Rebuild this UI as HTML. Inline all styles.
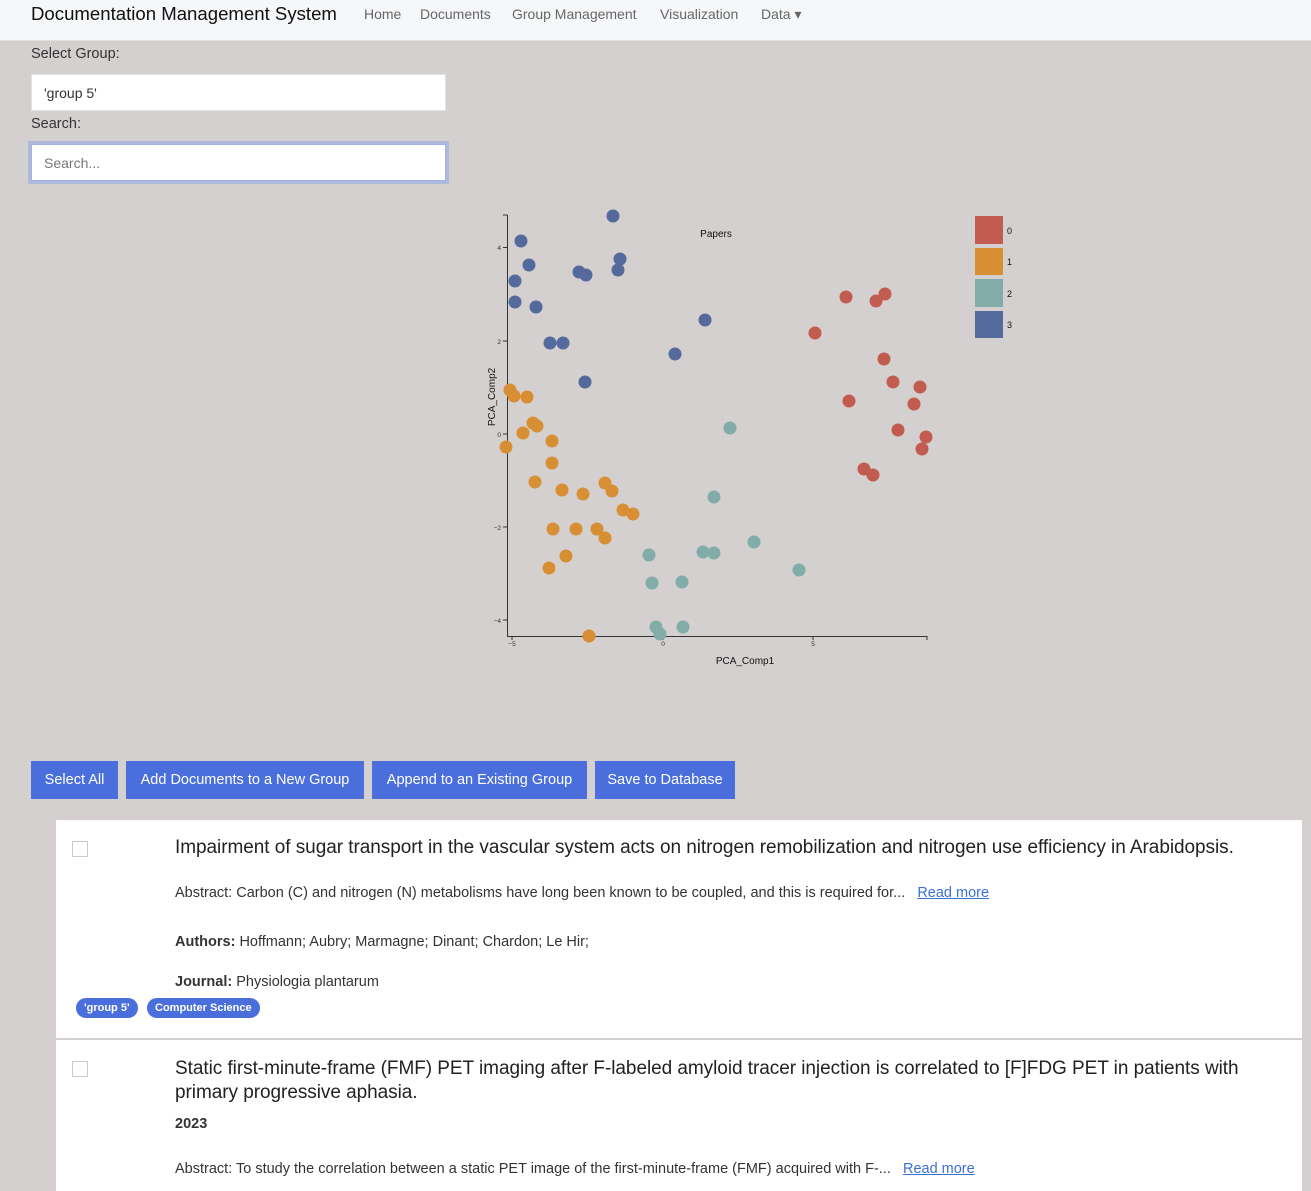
<!DOCTYPE html>
<html><head><meta charset="utf-8"><style>
*{box-sizing:border-box;margin:0;padding:0}
body{width:1311px;height:1191px;overflow:hidden;background:#d4d0cf;font-family:"Liberation Sans",sans-serif;color:#212529;position:relative}
.nav{position:absolute;left:0;top:0;width:1311px;height:41px;background:#f6f7f9;border-bottom:1px solid #e0e0e0}
.brand{position:absolute;left:31px;top:3px;font-size:18.6px;color:#111}
.nl{position:absolute;top:6px;font-size:14px;color:#666}
.lbl{position:absolute;left:31px;font-size:14.5px;color:#333}
.inp{position:absolute;left:31px;width:415px;height:37px;background:#fff;border:1px solid #e3e3e3;font-size:14px;padding:10px 12px}
.btn{position:absolute;top:761px;height:38px;background:#4a6fdc;color:#fff;font-size:14.5px;line-height:38px;text-align:center}
.card{position:absolute;left:56px;width:1246px;background:#fff}
.cb{position:absolute;left:16px;width:16px;height:16px;border:1px solid #ccc;background:#fff}
.t{position:absolute;left:119px;font-size:19px;color:#222;letter-spacing:-0.05px}
.s{position:absolute;left:119px;font-size:14.5px;color:#333}
.rm{color:#3a6fd8;text-decoration:underline;font-size:14.5px}
.badge{position:absolute;top:178px;height:20px;background:#4a6fdc;color:#fff;font-size:11px;font-weight:bold;border-radius:10px;line-height:20px;padding:0 8px}
</style></head><body>
<div class="nav">
<div class="brand">Documentation Management System</div>
<div class="nl" style="left:364px">Home</div>
<div class="nl" style="left:420px">Documents</div>
<div class="nl" style="left:512px">Group Management</div>
<div class="nl" style="left:660px">Visualization</div>
<div class="nl" style="left:761px">Data ▾</div>
</div>
<div class="lbl" style="top:46px">Select Group:</div>
<div class="inp" style="top:74px;color:#333">'group 5'</div>
<div class="lbl" style="top:116px">Search:</div>
<div class="inp" style="top:144px;color:#777;outline:3px solid #aeb9dc;border-color:#9db2e8">Search...</div>

<svg style="position:absolute;left:0;top:0" width="1311" height="700" font-family="Liberation Sans,sans-serif">
<g stroke="#333" stroke-width="1" fill="none">
<path d="M507.5 215V636.5H927M503 215h4.5M927 636v4M503 247.5h4M503 341h4M503 434h4M503 527h4M503 620h4M512 636v4M663 636v4M813 636v4"/>
</g>
<g font-size="6.5" fill="#333" text-anchor="end">
<text x="501" y="250">4</text><text x="501" y="344">2</text><text x="501" y="437">0</text><text x="501" y="530">−2</text><text x="501" y="623">−4</text>
</g>
<g font-size="6.5" fill="#333" text-anchor="middle">
<text x="512" y="646">−5</text><text x="663" y="646">0</text><text x="813" y="646">5</text>
</g>
<text x="716" y="237" font-size="10" text-anchor="middle" fill="#111">Papers</text>
<text x="745" y="664" font-size="10" text-anchor="middle" fill="#111">PCA_Comp1</text>
<text transform="translate(495,397) rotate(-90)" font-size="10" text-anchor="middle" fill="#111">PCA_Comp2</text>
<g fill="#546a9c">
<circle cx="613" cy="216" r="6.5"/><circle cx="521" cy="241" r="6.5"/><circle cx="529" cy="265" r="6.5"/><circle cx="515" cy="281" r="6.5"/><circle cx="515" cy="302" r="6.5"/><circle cx="536" cy="307" r="6.5"/><circle cx="579" cy="272" r="6.5"/><circle cx="586" cy="275" r="6.5"/><circle cx="620" cy="259" r="6.5"/><circle cx="618" cy="270" r="6.5"/><circle cx="705" cy="320" r="6.5"/><circle cx="550" cy="343" r="6.5"/><circle cx="563" cy="343" r="6.5"/><circle cx="675" cy="354" r="6.5"/><circle cx="585" cy="382" r="6.5"/>
</g>
<g fill="#d88f34">
<circle cx="510" cy="390" r="6.5"/><circle cx="514" cy="396" r="6.5"/><circle cx="527" cy="397" r="6.5"/><circle cx="533" cy="423" r="6.5"/><circle cx="537" cy="426" r="6.5"/><circle cx="523" cy="433" r="6.5"/><circle cx="552" cy="441" r="6.5"/><circle cx="506" cy="447" r="6.5"/><circle cx="552" cy="463" r="6.5"/><circle cx="535" cy="482" r="6.5"/><circle cx="562" cy="490" r="6.5"/><circle cx="583" cy="494" r="6.5"/><circle cx="605" cy="483" r="6.5"/><circle cx="612" cy="491" r="6.5"/><circle cx="623" cy="510" r="6.5"/><circle cx="633" cy="514" r="6.5"/><circle cx="553" cy="529" r="6.5"/><circle cx="576" cy="529" r="6.5"/><circle cx="597" cy="529" r="6.5"/><circle cx="605" cy="538" r="6.5"/><circle cx="566" cy="556" r="6.5"/><circle cx="549" cy="568" r="6.5"/><circle cx="589" cy="636" r="6.5"/>
</g>
<g fill="#82aca8">
<circle cx="730" cy="428" r="6.5"/><circle cx="714" cy="497" r="6.5"/><circle cx="754" cy="542" r="6.5"/><circle cx="703" cy="552" r="6.5"/><circle cx="714" cy="553" r="6.5"/><circle cx="649" cy="555" r="6.5"/><circle cx="652" cy="583" r="6.5"/><circle cx="682" cy="582" r="6.5"/><circle cx="799" cy="570" r="6.5"/><circle cx="656" cy="627" r="6.5"/><circle cx="660" cy="634" r="6.5"/><circle cx="683" cy="627" r="6.5"/>
</g>
<g fill="#c25c50">
<circle cx="846" cy="297" r="6.5"/><circle cx="876" cy="301" r="6.5"/><circle cx="885" cy="294" r="6.5"/><circle cx="815" cy="333" r="6.5"/><circle cx="884" cy="359" r="6.5"/><circle cx="893" cy="382" r="6.5"/><circle cx="920" cy="387" r="6.5"/><circle cx="849" cy="401" r="6.5"/><circle cx="914" cy="404" r="6.5"/><circle cx="898" cy="430" r="6.5"/><circle cx="926" cy="437" r="6.5"/><circle cx="922" cy="449" r="6.5"/><circle cx="864" cy="469" r="6.5"/><circle cx="873" cy="475" r="6.5"/>
</g>
<rect x="975" y="216" width="28" height="28" fill="#c25c50"/>
<rect x="975" y="248" width="28" height="27" fill="#d88f34"/>
<rect x="975" y="279" width="28" height="28" fill="#82aca8"/>
<rect x="975" y="311" width="28" height="27" fill="#546a9c"/>
<g font-size="9" fill="#111"><text x="1007" y="234">0</text><text x="1007" y="265">1</text><text x="1007" y="297">2</text><text x="1007" y="328">3</text></g>
</svg>

<div class="btn" style="left:31px;width:87px">Select All</div>
<div class="btn" style="left:126px;width:238px">Add Documents to a New Group</div>
<div class="btn" style="left:372px;width:215px">Append to an Existing Group</div>
<div class="btn" style="left:595px;width:140px">Save to Database</div>

<div class="card" style="top:820px;height:218px">
<div class="cb" style="top:21px"></div>
<div class="t" style="top:17px">Impairment of sugar transport in the vascular system acts on nitrogen remobilization and nitrogen use efficiency in Arabidopsis.</div>
<div class="s" style="top:65px">Abstract: Carbon (C) and nitrogen (N) metabolisms have long been known to be coupled, and this is required for... &nbsp; <span class="rm">Read more</span></div>
<div class="s" style="top:114px"><b>Authors:</b> Hoffmann; Aubry; Marmagne; Dinant; Chardon; Le Hir;</div>
<div class="s" style="top:154px"><b>Journal:</b> Physiologia plantarum</div>
<div class="badge" style="left:20px">'group 5'</div>
<div class="badge" style="left:91px">Computer Science</div>
</div>
<div class="card" style="top:1040px;height:151px">
<div class="cb" style="top:21px"></div>
<div class="t" style="top:17px;width:1080px;line-height:24px">Static first-minute-frame (FMF) PET imaging after F-labeled amyloid tracer injection is correlated to [F]FDG PET in patients with primary progressive aphasia.</div>
<div class="s" style="top:76px"><b>2023</b></div>
<div class="s" style="top:121px">Abstract: To study the correlation between a static PET image of the first-minute-frame (FMF) acquired with F-... &nbsp; <span class="rm">Read more</span></div>
</div>
</body></html>
